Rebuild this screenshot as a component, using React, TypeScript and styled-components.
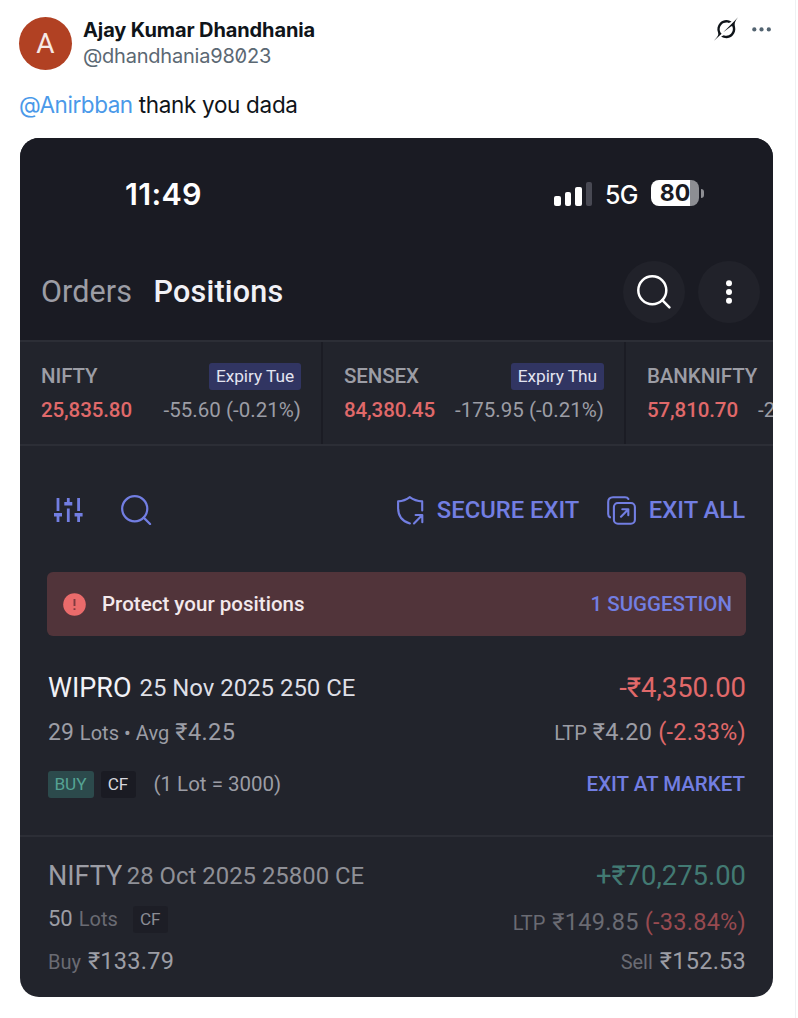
import React from "react";
import styled, { createGlobalStyle } from "styled-components";

const c = {
  head: "#1a1b23",
  body: "#22242c",
  line: "#2c2e36",
  grey: "#9c9da5",
  dim: "#6a6b73",
  white: "#f1f1f6",
  red: "#e0696a",
  blue: "#727ee2",
  green: "#427a73",
};

const GlobalStyle = createGlobalStyle`
  * { box-sizing: border-box; }
  body { margin: 0; background: #fff; }
`;

const Page = styled.main`
  width: 796px;
  height: 1018px;
  padding: 17px 22px 0 20px;
  border-right: 1px solid #eff1f3;
  background: #fff;
  font-family: Inter, "Liberation Sans", sans-serif;
  overflow: hidden;
`;

const Author = styled.header`
  display: flex;
  height: 53px;
  margin-left: -1px;
`;

const Avatar = styled.div`
  width: 53px;
  height: 53px;
  border-radius: 50%;
  background: #b14123;
  color: #f6e9e5;
  font: 400 28px/54px Roboto, sans-serif;
  text-align: center;
`;

const Names = styled.div`
  flex: 1;
  margin-left: 11px;
`;

const Name = styled.div`
  color: #0f1419;
  font-size: 20px;
  font-weight: 700;
  line-height: 26px;
  letter-spacing: -0.11px;
`;

const Handle = styled.div`
  color: #5b6873;
  font-size: 20px;
  line-height: 26px;
  letter-spacing: -0.22px;
  font-feature-settings: "zero";
`;

const PostActions = styled.div`
  display: flex;
  gap: 14px;
  margin-right: 1px;
`;

const Message = styled.p`
  margin: 19px 0 0 -1px;
  color: #0f1419;
  font-size: 22.5px;
  line-height: 32px;
  letter-spacing: -0.32px;
`;

const Mention = styled.span`
  color: #4a99e9;
  letter-spacing: -0.45px;
`;

const Card = styled.section`
  width: 753px;
  height: 859px;
  margin-top: 17px;
  border-radius: 19px;
  overflow: hidden;
  background: ${c.body};
  font-family: Roboto, "Liberation Sans", sans-serif;
`;

const PhoneHead = styled.div`
  height: 202px;
  background: ${c.head};
`;

const StatusBar = styled.div`
  display: flex;
  align-items: center;
  height: 112px;
  padding: 0 69px 0 105px;
  font-family: Inter, sans-serif;
  color: #fff;
`;

const Clock = styled.span`
  flex: 1;
  margin-top: -2px;
  font-size: 30.5px;
  font-weight: 600;
  letter-spacing: 0.3px;
`;

const Bars = styled.span`
  display: flex;
  align-items: flex-end;
  gap: 4px;
  height: 24px;
  margin-right: 13px;
  margin-top: -1px;
`;

const Bar = styled.i<{ $h: number; $off?: boolean }>`
  width: 6.4px;
  height: ${(p) => p.$h}px;
  border-radius: 2px;
  background: ${(p) => (p.$off ? "#484953" : "#fff")};
`;

const Network = styled.span`
  width: 34px;
  margin-right: 12px;
  margin-top: 1px;
  font-size: 25px;
  font-weight: 500;
  letter-spacing: -0.6px;
`;

const Battery = styled.span`
  width: 48px;
  height: 26px;
  margin-top: -2px;
  border-radius: 8px;
  background: linear-gradient(90deg, #fff 39px, #8d8e93 39px);
  color: ${c.head};
  font-size: 23px;
  font-weight: 700;
  line-height: 26px;
  text-align: center;
`;

const BatteryTip = styled.i`
  width: 3px;
  height: 9px;
  margin: -2px 0 0 2px;
  border-radius: 0 4px 4px 0;
  background: #8d8e93;
`;

const Nav = styled.nav`
  display: flex;
  align-items: center;
  height: 84px;
  padding: 0 13px 0 21px;
`;

const Tabs = styled.div`
  display: flex;
  flex: 1;
  gap: 21.5px;
`;

const Tab = styled.span<{ $active?: boolean }>`
  color: ${(p) => (p.$active ? c.white : c.grey)};
  font-size: 30.5px;
  font-weight: ${(p) => (p.$active ? 500 : 400)};
  line-height: 40px;
  letter-spacing: ${(p) => (p.$active ? 0.2 : 0.1)}px;
`;

const RoundButton = styled.button`
  display: grid;
  place-items: center;
  width: 62px;
  height: 62px;
  margin-left: 13px;
  padding: 0;
  border: 0;
  border-radius: 50%;
  background: #21222a;
`;

const Tickers = styled.div`
  display: flex;
  height: 106px;
  border-top: 2px solid ${c.line};
  border-bottom: 2px solid ${c.line};
`;

const Ticker = styled.div`
  flex: none;
  width: 303px;
  padding: 20px 20px 0 21px;
  border-right: 2px solid #1b1c24;
`;

const TickerRow = styled.div<{ $h: number }>`
  display: flex;
  align-items: center;
  justify-content: space-between;
  height: ${(p) => p.$h}px;
`;

const Text = styled.span<{
  $size: number;
  $color?: string;
  $weight?: number;
  $space?: number;
  $ml?: number;
}>`
  color: ${(p) => p.$color ?? c.grey};
  font-size: ${(p) => p.$size}px;
  font-weight: ${(p) => p.$weight ?? 400};
  letter-spacing: ${(p) => p.$space ?? 0}px;
  margin-left: ${(p) => p.$ml ?? 0}px;
  white-space: nowrap;
`;

const Expiry = styled.span`
  height: 27px;
  padding: 0 7px;
  border-radius: 3px;
  background: #313562;
  color: #e3e4f0;
  font-size: 17.3px;
  line-height: 27px;
  letter-spacing: -0.06px;
`;

const Toolbar = styled.div`
  display: flex;
  align-items: center;
  height: 32px;
  margin: 48px 28px 0 33px;
`;

const ToolbarGap = styled.span<{ $w: number }>`
  width: ${(p) => p.$w}px;
`;

const Spacer = styled.span`
  flex: 1;
`;

const Banner = styled.div`
  display: flex;
  align-items: center;
  height: 64px;
  margin: 46px 27px 0;
  padding: 0 14px 0 16px;
  border-radius: 6px;
  background: #51343a;
`;

const Position = styled.article<{ $h: number }>`
  height: ${(p) => p.$h}px;
  padding: 0 27px 0 28px;
`;

const Divider = styled.hr`
  height: 2px;
  margin: 0;
  border: 0;
  background: ${c.line};
`;

const Line = styled.div<{ $h: number }>`
  display: flex;
  justify-content: space-between;
  height: ${(p) => p.$h}px;
`;

const Side = styled.div<{ $top?: number; $center?: boolean }>`
  display: flex;
  align-items: ${(p) => (p.$center ? "center" : "baseline")};
  height: 34px;
  margin-top: ${(p) => p.$top ?? 0}px;
  line-height: 34px;
`;

const Tag = styled.span<{ $bg: string; $color: string; $w: number; $ml?: number }>`
  width: ${(p) => p.$w}px;
  height: 27px;
  margin-left: ${(p) => p.$ml ?? 0}px;
  border-radius: 3px;
  background: ${(p) => p.$bg};
  color: ${(p) => p.$color};
  font-size: 17.2px;
  line-height: 27px;
  text-align: center;
`;

const GrokIcon = () => (
  <svg width="24" height="24" viewBox="0 0 33 32" fill="#0f1419">
    <path d="M12.745 20.54l10.97-8.19c.539-.4 1.307-.244 1.564.38 1.349 3.288.746 7.241-1.938 9.955-2.683 2.714-6.417 3.31-9.83 1.954l-3.728 1.745c5.347 3.697 11.84 2.782 15.898-1.324 3.219-3.255 4.216-7.692 3.284-11.693l.008.009c-1.351-5.878.332-8.227 3.782-13.031L33 0l-4.54 4.59v-.014L12.743 20.544m-2.263 1.987c-3.837-3.707-3.175-9.446.1-12.755 2.42-2.449 6.388-3.448 9.852-1.979l3.72-1.737c-.67-.49-1.53-1.017-2.515-1.387-4.455-1.854-9.789-.931-13.41 2.728-3.483 3.523-4.579 8.94-2.697 13.561 1.405 3.454-.899 5.898-3.22 8.364C1.49 30.2.666 31.074 0 32l10.478-9.466" />
  </svg>
);

const MoreIcon = () => (
  <svg width="20" height="24" viewBox="0 0 20 24" fill="#536471">
    <circle cx="2.3" cy="12.4" r="2.1" />
    <circle cx="9.5" cy="12.4" r="2.1" />
    <circle cx="16.8" cy="12.4" r="2.1" />
  </svg>
);

const SearchIcon = ({ color, size }: { color: string; size: number }) => (
  <svg width={size} height={size} viewBox="0 0 34 34" fill="none" stroke={color} strokeWidth="2.5" strokeLinecap="round">
    <circle cx="15.3" cy="15.3" r="14" />
    <path d="M25.3 25.2L32.4 32.3" />
  </svg>
);

const KebabIcon = () => (
  <svg width="8" height="26" viewBox="0 0 8 26" fill="#fff">
    <circle cx="4" cy="4.2" r="3" />
    <circle cx="4" cy="13" r="3" />
    <circle cx="4" cy="21.8" r="3" />
  </svg>
);

const SlidersIcon = () => (
  <svg width="31" height="24" viewBox="0 0 31 24" fill="none" stroke={c.blue} strokeWidth="2.8">
    <path d="M5 0V13M5 16V24M15.3 0V6M15.3 10.5V24M25.6 0V13M25.6 16V24" />
    <path d="M1 16.8H9M11.3 5.8H19.3M21.6 16.8H29.6" strokeWidth="3.4" />
  </svg>
);

const ShieldExitIcon = () => (
  <svg width="27" height="29" viewBox="0 0 27 29" fill="none" stroke={c.blue} strokeWidth="2.1" strokeLinecap="round" strokeLinejoin="round">
    <path d="M25.2 14.5V5.4C19.8 5.2 16.5 4 12.8 1.2C9.2 4 6 5.2 1.1 5.4V12C1.1 20 5.5 25.4 12.9 27.5" />
    <path d="M17 27.4L25.3 19M18.6 19H25.3V26.3" />
  </svg>
);

const ExitAllIcon = () => (
  <svg width="29" height="29" viewBox="0 0 29 29" fill="none" stroke={c.blue} strokeWidth="2.1" strokeLinecap="round" strokeLinejoin="round">
    <path d="M3 21.3Q1.2 20.5 1.2 18V6Q1.2 1.2 6 1.2H18Q20.5 1.2 21.4 3" />
    <rect x="6.9" y="7" width="21" height="20.8" rx="4" />
    <path d="M14 20.7L21.3 13.3M15.3 13.3H21.3V19.3" />
  </svg>
);

const AlertIcon = () => (
  <svg width="23" height="23" viewBox="0 0 23 23">
    <circle cx="11.5" cy="11.5" r="11.3" fill="#ea6b6b" />
    <path d="M11.5 6V13M11.5 15.3V17" stroke="#7e3b40" strokeWidth="1.9" />
  </svg>
);

const tickers = [
  { name: "NIFTY", expiry: "Expiry Tue", price: "25,835.80", change: "-55.60 (-0.21%)" },
  { name: "SENSEX", expiry: "Expiry Thu", price: "84,380.45", change: "-175.95 (-0.21%)" },
  { name: "BANKNIFTY", price: "57,810.70", change: "-267.35 (-0.46%)" },
];

export default function App() {
  return (
    <Page>
      <GlobalStyle />
      <Author>
        <Avatar>A</Avatar>
        <Names>
          <Name>Ajay Kumar Dhandhania</Name>
          <Handle>@dhandhania98023</Handle>
        </Names>
        <PostActions>
          <GrokIcon />
          <MoreIcon />
        </PostActions>
      </Author>
      <Message>
        <Mention>@Anirbban</Mention> thank you dada
      </Message>

      <Card>
        <PhoneHead>
          <StatusBar>
            <Clock>11:49</Clock>
            <Bars>
              <Bar $h={10} />
              <Bar $h={14} />
              <Bar $h={19} />
              <Bar $h={24} $off />
            </Bars>
            <Network>5G</Network>
            <Battery>80</Battery>
            <BatteryTip />
          </StatusBar>
          <Nav>
            <Tabs>
              <Tab>Orders</Tab>
              <Tab $active>Positions</Tab>
            </Tabs>
            <RoundButton aria-label="Search">
              <SearchIcon color="#fff" size={34} />
            </RoundButton>
            <RoundButton aria-label="More">
              <KebabIcon />
            </RoundButton>
          </Nav>
        </PhoneHead>

        <Tickers>
          {tickers.map((t) => (
            <Ticker key={t.name}>
              <TickerRow $h={28}>
                <Text $size={20.5} $weight={500} $space={-0.1}>{t.name}</Text>
                {t.expiry && <Expiry>{t.expiry}</Expiry>}
              </TickerRow>
              <TickerRow $h={40}>
                <Text $size={20.5} $weight={500} $space={-0.1} $color={c.red}>{t.price}</Text>
                <Text $size={20.5} $space={0.03}>{t.change}</Text>
              </TickerRow>
            </Ticker>
          ))}
        </Tickers>

        <Toolbar>
          <SlidersIcon />
          <ToolbarGap $w={37} />
          <SearchIcon color={c.blue} size={30.5} />
          <Spacer />
          <ShieldExitIcon />
          <Text $size={23.8} $weight={500} $space={-0.02} $color={c.blue} $ml={13}>SECURE EXIT</Text>
          <ToolbarGap $w={28} />
          <ExitAllIcon />
          <Text $size={23.8} $weight={500} $color={c.blue} $ml={12.5}>EXIT ALL</Text>
        </Toolbar>

        <Banner>
          <AlertIcon />
          <Text $size={20.5} $weight={500} $color="#f3e9ec" $space={0.03} $ml={16}>Protect your positions</Text>
          <Spacer />
          <Text $size={20.5} $weight={500} $color={c.blue}>1 SUGGESTION</Text>
        </Banner>

        <Position $h={199}>
          <Line $h={84}>
            <Side $center $top={35}>
              <Text $size={27} $color={c.white}>WIPRO</Text>
              <Text $size={23.9} $color="#dedfe6" $ml={8}>25 Nov 2025 250 CE</Text>
            </Side>
            <Side $center $top={35}>
              <Text $size={27.4} $color={c.red}>-₹4,350.00</Text>
            </Side>
          </Line>
          <Line $h={48}>
            <Side $top={-5}>
              <Text $size={23}>29</Text>
              <Text $size={20} $space={0.04} $ml={6}>Lots • Avg</Text>
              <Text $size={23.5} $space={0.4} $ml={6}>₹4.25</Text>
            </Side>
            <Side $top={-5}>
              <Text $size={20}>LTP</Text>
              <Text $size={23.5} $space={0.3} $ml={6}>₹4.20</Text>
              <Text $size={23.5} $space={0.25} $ml={6} $color={c.red}>(-2.33%)</Text>
            </Side>
          </Line>
          <Line $h={34}>
            <Side $center $top={-1}>
              <Tag $w={46} $ml={-0.5} $bg="#2c4a4c" $color="#55a394">BUY</Tag>
              <Tag $w={35} $ml={7} $bg={c.head} $color="#d6d7dd">CF</Tag>
              <Text $size={20.5} $ml={18}>(1 Lot = 3000)</Text>
            </Side>
            <Side $center $top={-1}>
              <Text $size={20.5} $weight={500} $color={c.blue}>EXIT AT MARKET</Text>
              <ToolbarGap $w={1} />
            </Side>
          </Line>
        </Position>
        <Divider />
        <Position $h={160}>
          <Line $h={66}>
            <Side $center $top={22}>
              <Text $size={27}>NIFTY</Text>
              <Text $size={23.9} $color="#8f9097" $ml={4.5}>28 Oct 2025 25800 CE</Text>
            </Side>
            <Side $center $top={22}>
              <Text $size={27.4} $color={c.green}>+₹70,275.00</Text>
            </Side>
          </Line>
          <Line $h={42}>
            <Side $center $top={-1}>
              <Text $size={22}>50</Text>
              <Text $size={20} $color={c.dim} $ml={6}>Lots</Text>
              <Tag $w={35} $ml={15} $bg="#1d1e26" $color="#8b8c94">CF</Tag>
            </Side>
            <Side $top={2}>
              <Text $size={20} $color={c.dim}>LTP</Text>
              <Text $size={23.5} $space={0.3} $color={c.dim} $ml={7}>₹149.85</Text>
              <Text $size={23.5} $space={0.25} $color="#984a50" $ml={6}>(-33.84%)</Text>
            </Side>
          </Line>
          <Line $h={34}>
            <Side $top={-1}>
              <Text $size={20} $color={c.dim}>Buy</Text>
              <Text $size={23.5} $space={0.25} $ml={7}>₹133.79</Text>
            </Side>
            <Side $top={-1}>
              <Text $size={20} $color={c.dim}>Sell</Text>
              <Text $size={23.5} $space={0.25} $ml={7}>₹152.53</Text>
            </Side>
          </Line>
        </Position>
      </Card>
    </Page>
  );
}
